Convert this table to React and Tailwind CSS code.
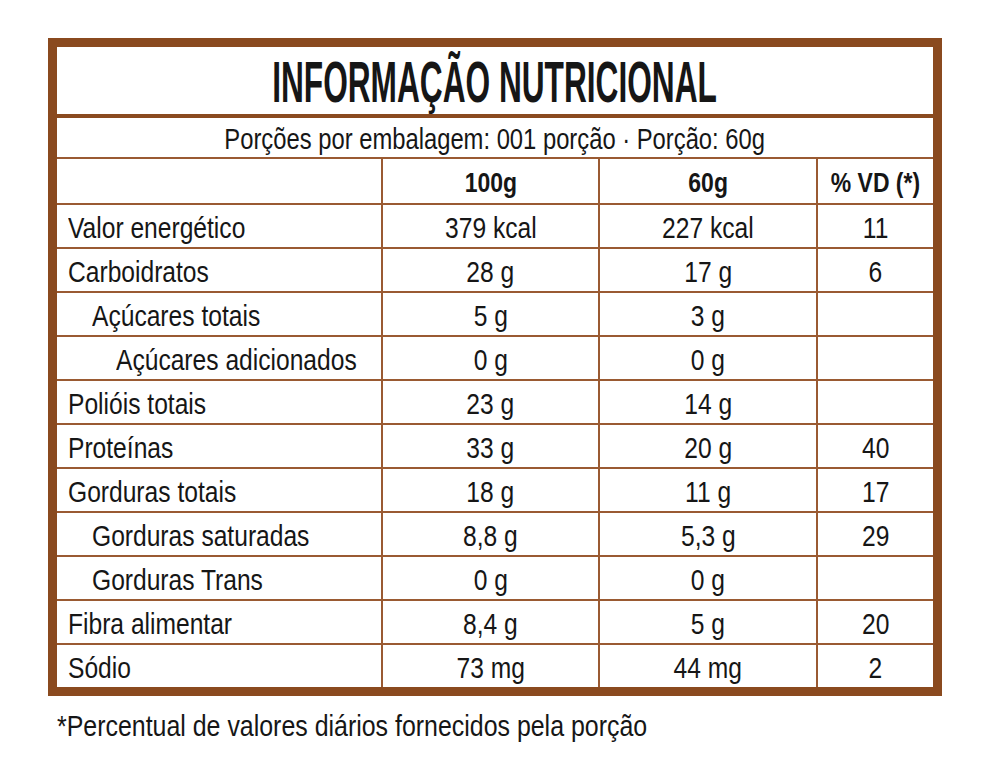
const rows = [
  { label: "Valor energético", indent: 0, a: "379 kcal", b: "227 kcal", vd: "11" },
  { label: "Carboidratos", indent: 0, a: "28 g", b: "17 g", vd: "6" },
  { label: "Açúcares totais", indent: 1, a: "5 g", b: "3 g", vd: "" },
  { label: "Açúcares adicionados", indent: 2, a: "0 g", b: "0 g", vd: "" },
  { label: "Polióis totais", indent: 0, a: "23 g", b: "14 g", vd: "" },
  { label: "Proteínas", indent: 0, a: "33 g", b: "20 g", vd: "40" },
  { label: "Gorduras totais", indent: 0, a: "18 g", b: "11 g", vd: "17" },
  { label: "Gorduras saturadas", indent: 1, a: "8,8 g", b: "5,3 g", vd: "29" },
  { label: "Gorduras Trans", indent: 1, a: "0 g", b: "0 g", vd: "" },
  { label: "Fibra alimentar", indent: 0, a: "8,4 g", b: "5 g", vd: "20" },
  { label: "Sódio", indent: 0, a: "73 mg", b: "44 mg", vd: "2" },
]

const indents = ["pl-[11px]", "pl-[35px]", "pl-[59px]"]

// the label font is a tall condensed face; squeeze Liberation Sans to match
function Narrow({ children, left }) {
  return (
    <span className={`inline-block whitespace-nowrap scale-x-[0.82] ${left ? "origin-left" : "origin-center"}`}>
      {children}
    </span>
  )
}

export default function App() {
  return (
    <div className="w-[992px] h-[778px] bg-white pt-[38px] pl-[48px] text-[#161616] font-['Liberation_Sans',Arial,sans-serif]">
      <div className="w-[894px] border-[9px] border-[#8a4a1f] bg-white">
        <div className="h-[71px] border-b-4 border-[#8a4a1f] flex items-center justify-center overflow-hidden">
          <span className="inline-block whitespace-nowrap font-bold text-[56px] leading-none scale-x-[0.565] scale-y-[1.02] pt-1">INFORMAÇÃO NUTRICIONAL</span>
        </div>
        <div className="h-[41px] border-b-2 border-[#9a5a32] flex items-center justify-center text-[29px] leading-none pt-1 overflow-hidden">
          <Narrow>Porções por embalagem: 001 porção · Porção: 60g</Narrow>
        </div>
        <div className="grid grid-cols-[326px_217px_218px_1fr] h-[46px] border-b-2 border-[#9a5a32] font-bold text-[28px] leading-none">
          <div className="border-r-2 border-[#9a5a32]" />
          <div className="border-r-2 border-[#9a5a32] flex items-center justify-center pt-1"><Narrow>100g</Narrow></div>
          <div className="border-r-2 border-[#9a5a32] flex items-center justify-center pt-1"><Narrow>60g</Narrow></div>
          <div className="flex items-center justify-center pt-1"><Narrow>% VD (*)</Narrow></div>
        </div>
        {rows.map((r, i) => (
          <div
            key={r.label}
            className={`grid grid-cols-[326px_217px_218px_1fr] text-[30px] leading-none ${i < rows.length - 1 ? "h-[44px] border-b-2 border-[#9a5a32]" : "h-[42px]"}`}
          >
            <div className={`border-r-2 border-[#9a5a32] flex items-center pt-1 ${indents[r.indent]}`}><Narrow left>{r.label}</Narrow></div>
            <div className="border-r-2 border-[#9a5a32] flex items-center justify-center pt-1"><Narrow>{r.a}</Narrow></div>
            <div className="border-r-2 border-[#9a5a32] flex items-center justify-center pt-1"><Narrow>{r.b}</Narrow></div>
            <div className="flex items-center justify-center pt-1"><Narrow>{r.vd}</Narrow></div>
          </div>
        ))}
      </div>
      <p className="mt-[14px] ml-[9px] text-[30.4px] leading-none"><Narrow left>*Percentual de valores diários fornecidos pela porção</Narrow></p>
    </div>
  )
}
